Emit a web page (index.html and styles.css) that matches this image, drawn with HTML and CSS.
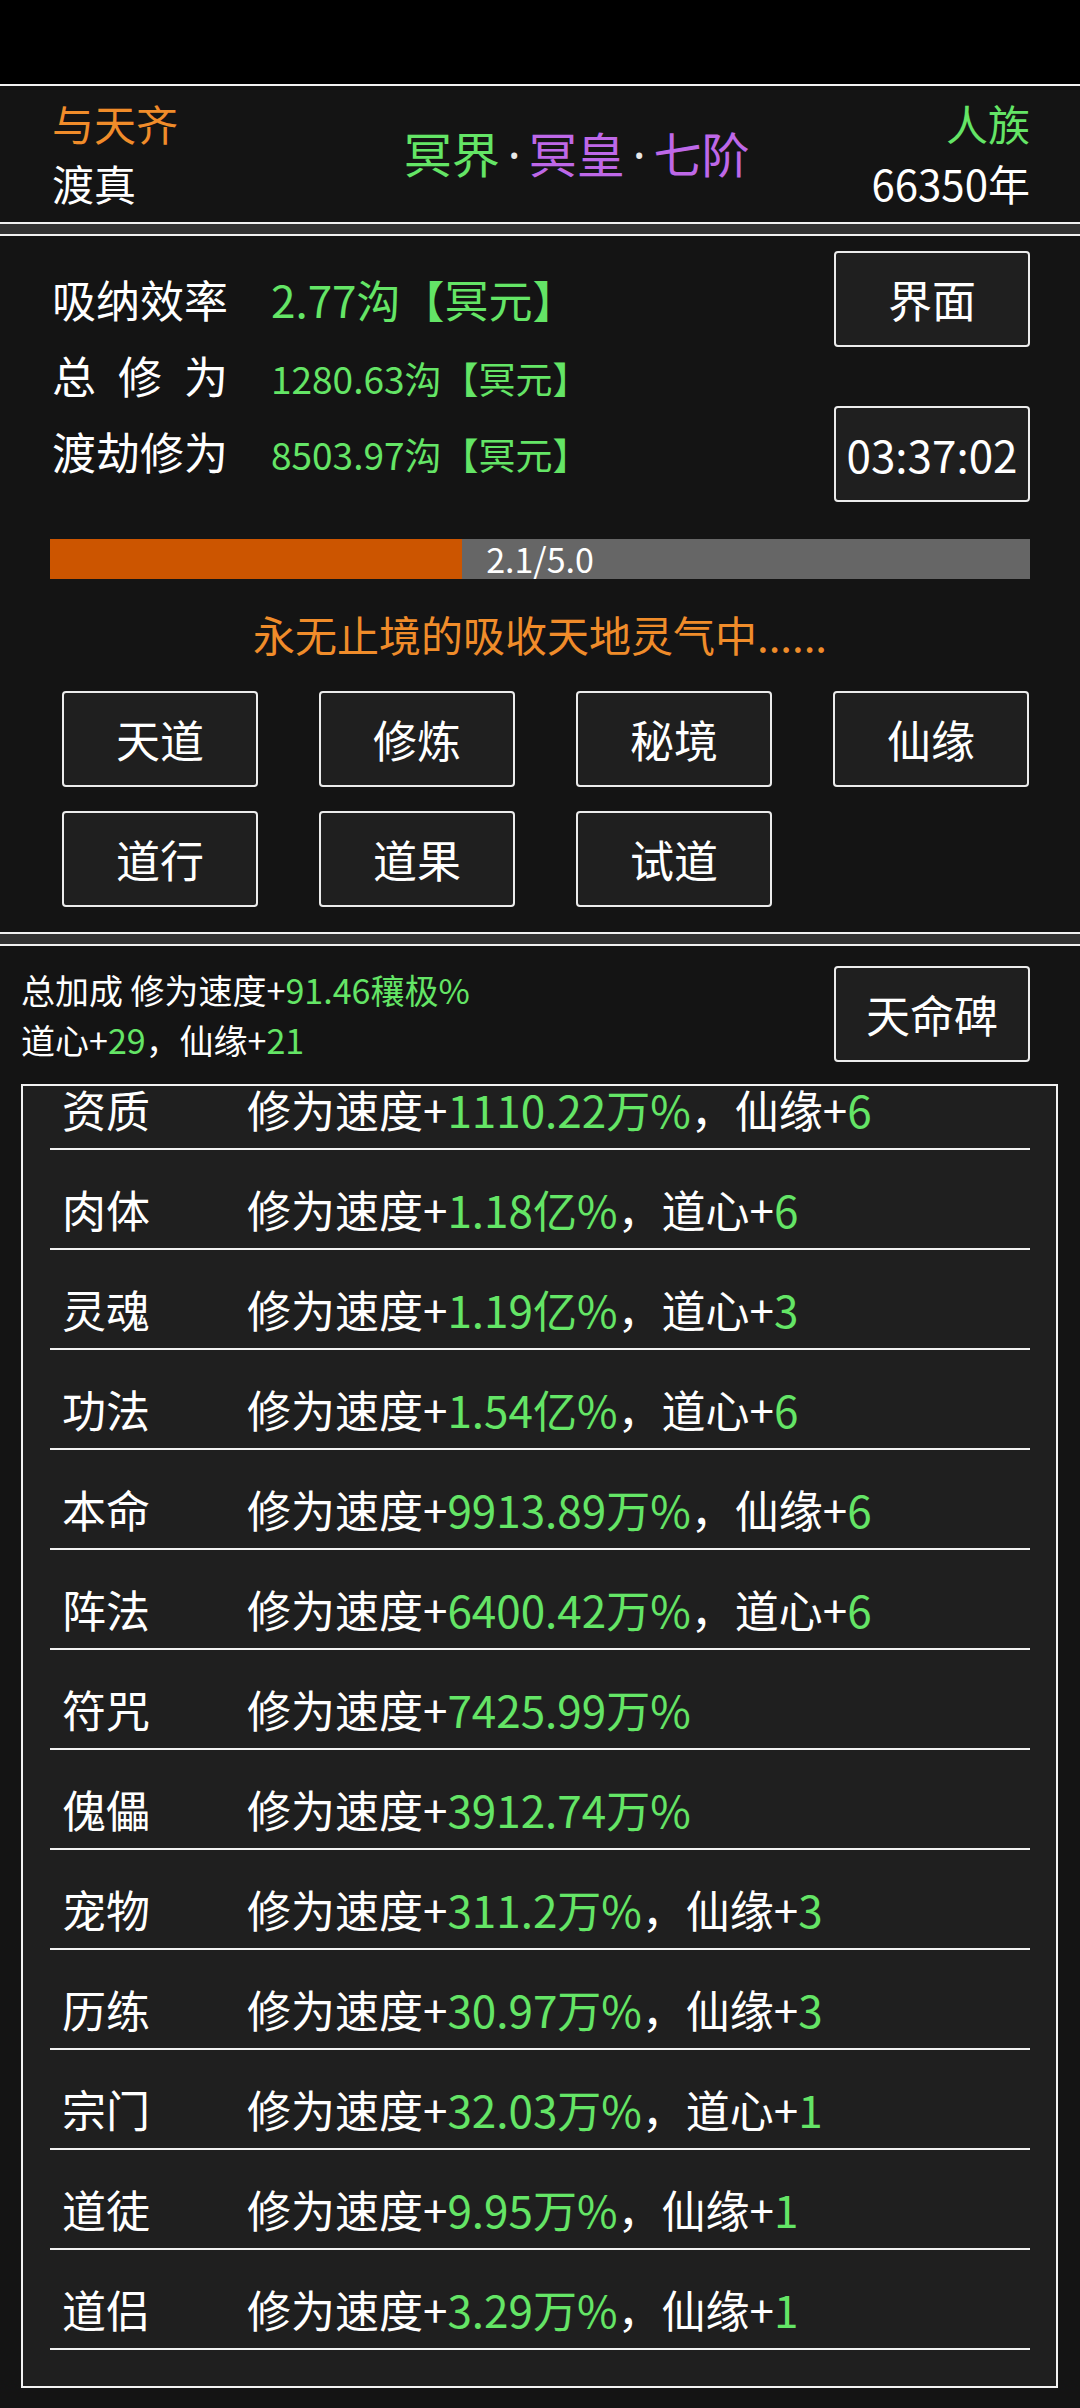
FILE: index.html
```html
<!DOCTYPE html>
<html lang="zh-CN">
<head>
<meta charset="utf-8">
<title>修仙</title>
<link rel="stylesheet" href="styles.css">
</head>
<body>
<div class="statusbar"></div>

<header class="panel top">
  <div class="top-left">
    <div class="orange">与天齐</div>
    <div>渡真</div>
  </div>
  <div class="title"><span class="green">冥界</span><span class="dot">·</span><span class="purple">冥皇</span><span class="dot">·</span><span class="purple">七阶</span></div>
  <div class="top-right">
    <div class="green">人族</div>
    <div>66350年</div>
  </div>
</header>

<div class="gap"></div>

<section class="panel main">
  <div class="stats">
    <div class="stat-list">
      <div class="stat"><span class="label">吸纳效率</span><span class="green">2.77沟【冥元】</span></div>
      <div class="stat"><span class="label spaced">总修为</span><span class="green small">1280.63沟【冥元】</span></div>
      <div class="stat"><span class="label">渡劫修为</span><span class="green small">8503.97沟【冥元】</span></div>
    </div>
    <div class="side-btns">
      <div class="btn">界面</div>
      <div class="btn">03:37:02</div>
    </div>
  </div>
  <div class="progress">
    <div class="fill" style="width:42%"></div>
    <span class="progress-text">2.1/5.0</span>
  </div>
  <div class="msg">永无止境的吸收天地灵气中......</div>
  <div class="btn-grid">
    <div class="btn">天道</div>
    <div class="btn">修炼</div>
    <div class="btn">秘境</div>
    <div class="btn">仙缘</div>
    <div class="btn">道行</div>
    <div class="btn">道果</div>
    <div class="btn">试道</div>
  </div>
</section>

<div class="gap"></div>

<section class="panel bonus">
  <div class="bonus-head">
    <div class="bonus-text">
      <div>总加成 修为速度+<span class="green">91.46穰极%</span></div>
      <div>道心+<span class="green">29</span>，仙缘+<span class="green">21</span></div>
    </div>
    <div class="btn head-btn">天命碑</div>
  </div>
  <div class="list-box">
    <div class="list">
      <div class="row"><span class="row-label">资质</span><span>修为速度+<span class="green">1110.22万%</span>，仙缘+<span class="green">6</span></span></div>
      <div class="row"><span class="row-label">肉体</span><span>修为速度+<span class="green">1.18亿%</span>，道心+<span class="green">6</span></span></div>
      <div class="row"><span class="row-label">灵魂</span><span>修为速度+<span class="green">1.19亿%</span>，道心+<span class="green">3</span></span></div>
      <div class="row"><span class="row-label">功法</span><span>修为速度+<span class="green">1.54亿%</span>，道心+<span class="green">6</span></span></div>
      <div class="row"><span class="row-label">本命</span><span>修为速度+<span class="green">9913.89万%</span>，仙缘+<span class="green">6</span></span></div>
      <div class="row"><span class="row-label">阵法</span><span>修为速度+<span class="green">6400.42万%</span>，道心+<span class="green">6</span></span></div>
      <div class="row"><span class="row-label">符咒</span><span>修为速度+<span class="green">7425.99万%</span></span></div>
      <div class="row"><span class="row-label">傀儡</span><span>修为速度+<span class="green">3912.74万%</span></span></div>
      <div class="row"><span class="row-label">宠物</span><span>修为速度+<span class="green">311.2万%</span>，仙缘+<span class="green">3</span></span></div>
      <div class="row"><span class="row-label">历练</span><span>修为速度+<span class="green">30.97万%</span>，仙缘+<span class="green">3</span></span></div>
      <div class="row"><span class="row-label">宗门</span><span>修为速度+<span class="green">32.03万%</span>，道心+<span class="green">1</span></span></div>
      <div class="row"><span class="row-label">道徒</span><span>修为速度+<span class="green">9.95万%</span>，仙缘+<span class="green">1</span></span></div>
      <div class="row"><span class="row-label">道侣</span><span>修为速度+<span class="green">3.29万%</span>，仙缘+<span class="green">1</span></span></div>
    </div>
  </div>
</section>
</body>
</html>
```

FILE: styles.css
```css
* { box-sizing: border-box; }

html, body {
  margin: 0;
  padding: 0;
  background: #000;
  width: 1080px;
  height: 2408px;
  overflow: hidden;
}

body {
  font-family: "Noto Sans CJK SC", "Noto Sans", sans-serif;
  color: #fff;
}

.statusbar { height: 84px; background: #000; }

.gap { height: 10px; background: #333; }

.panel {
  background: #141414;
  border-top: 2px solid #f2f2f2;
  border-bottom: 2px solid #f2f2f2;
}

.green { color: #64e566; }
.purple { color: #be68e8; }
.orange { color: #f08c2a; }

/* top panel */
.top {
  height: 140px;
  display: flex;
  align-items: center;
  padding: 7px 50px 9px 52px;
  font-size: 42px;
  line-height: 60px;
}
.top-left { width: 230px; }
.title {
  flex: 1;
  text-align: center;
  font-size: 48px;
  line-height: 60px;
  white-space: nowrap;
}
.dot {
  color: #e8e8e8;
  font-family: "Noto Sans", "DejaVu Sans", sans-serif;
  padding: 0 8px;
}
.top-right { text-align: right; }

/* main panel */
.main { height: 700px; }

.stats {
  display: flex;
  justify-content: space-between;
  padding: 0 50px 0 52px;
}
.stat-list { padding-top: 25px; }
.stat {
  display: flex;
  align-items: baseline;
  height: 76px;
  line-height: 76px;
  font-size: 44px;
  white-space: nowrap;
}
.label { width: 219px; flex: none; }
.spaced { letter-spacing: 22px; }
.small { font-size: 37px; }

.side-btns {
  padding-top: 15px;
  display: flex;
  flex-direction: column;
  gap: 59px;
}

.btn {
  width: 196px;
  height: 96px;
  border: 2px solid #ececec;
  border-radius: 4px;
  background: #1f1f1f;
  display: flex;
  align-items: center;
  justify-content: center;
  font-size: 44px;
  color: #fff;
  white-space: nowrap;
}

.progress {
  position: relative;
  margin: 37px 50px 0;
  height: 40px;
  background: #666;
  text-align: center;
}
.fill {
  position: absolute;
  left: 0;
  top: 0;
  bottom: 0;
  background: #cc5500;
}
.progress-text {
  position: relative;
  font-size: 34px;
  line-height: 40px;
}

.msg {
  margin-top: 25px;
  height: 60px;
  line-height: 60px;
  text-align: center;
  font-size: 42px;
  color: #f08c2a;
}

.btn-grid {
  margin-top: 27px;
  padding: 0 50px 0 62px;
  display: grid;
  grid-template-columns: repeat(4, 196px);
  column-gap: 61px;
  row-gap: 24px;
}

/* bonus panel */
.bonus {
  height: 1464px;
  border-bottom: none;
  padding-bottom: 20px;
}
.bonus-head {
  display: flex;
  justify-content: space-between;
  align-items: flex-start;
  padding: 19px 50px 0 21px;
}
.head-btn { margin-top: 1px; }
.bonus-text {
  font-size: 34px;
  line-height: 50px;
  white-space: nowrap;
}

.list-box {
  margin: 19px 22px 0 21px;
  height: 1304px;
  border: 2px solid #f2f2f2;
  background: #1f1f1f;
  overflow: hidden;
}
.list {
  margin-top: -36px;
  padding: 0 26px 36px 27px;
}
.row {
  height: 100px;
  border-bottom: 2px solid #f2f2f2;
  padding: 29px 0 0 12px;
  line-height: 60px;
  font-size: 44px;
  display: flex;
  white-space: nowrap;
}
.row-label { width: 185px; flex: none; }
```
